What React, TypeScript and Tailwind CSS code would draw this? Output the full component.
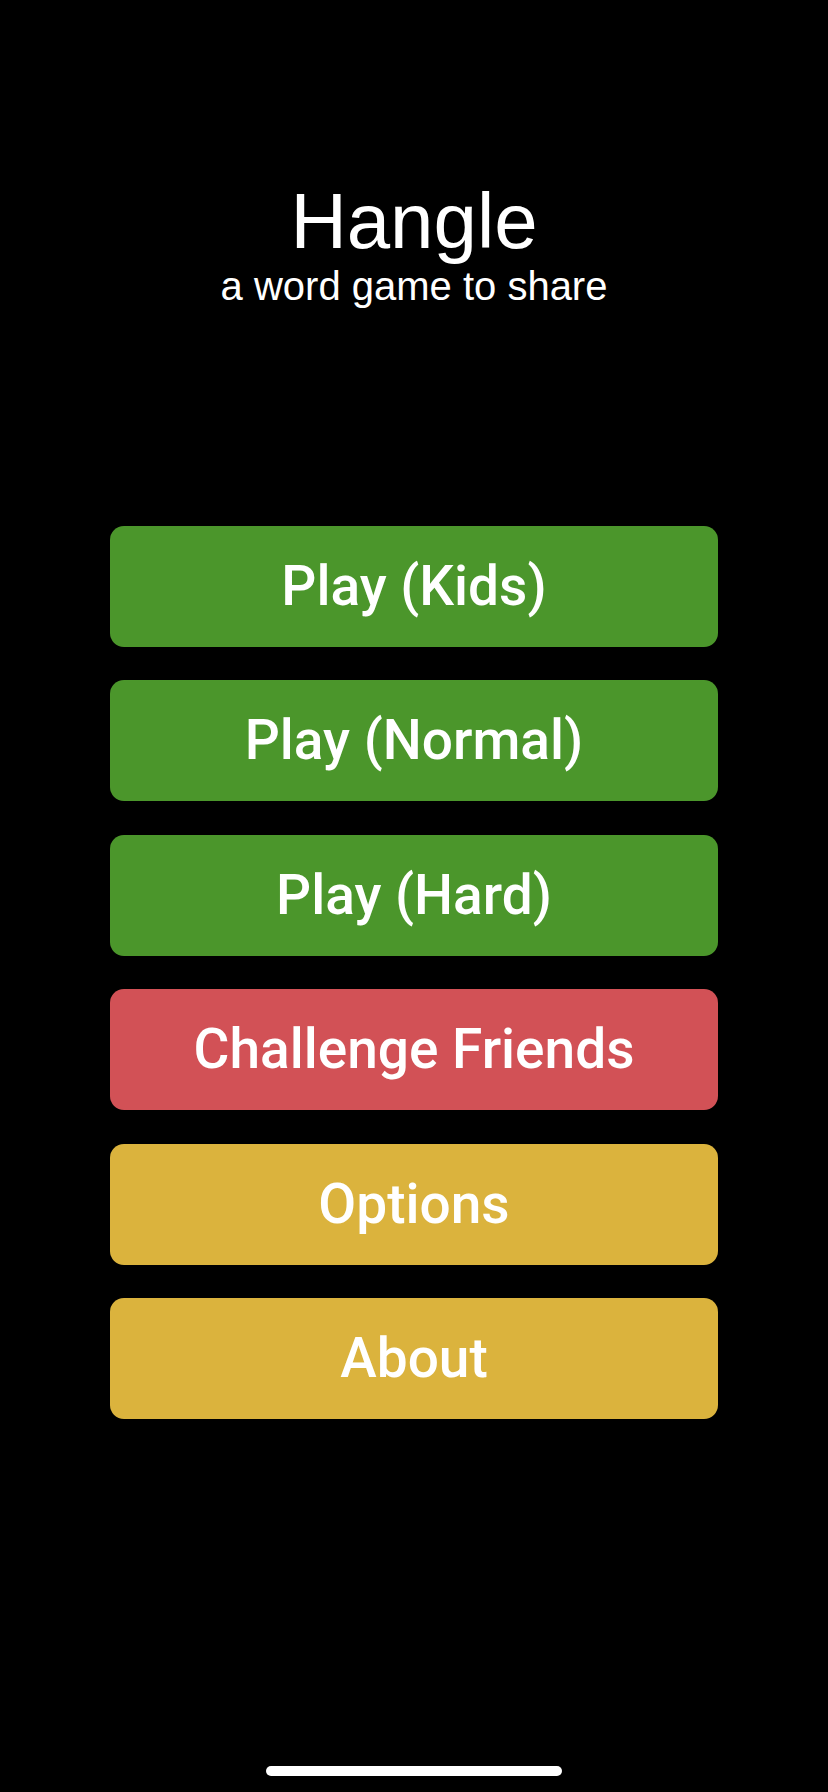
import React from "react";

const buttons: { label: string; cls: string }[] = [
  { label: "Play (Kids)", cls: "bg-[#4b962b]" },
  { label: "Play (Normal)", cls: "bg-[#4b962b]" },
  { label: "Play (Hard)", cls: "bg-[#4b962b]" },
  { label: "Challenge Friends", cls: "bg-[#d25156]" },
  { label: "Options", cls: "bg-[#dbb33d]" },
  { label: "About", cls: "bg-[#dbb33d]" },
];

export default function App() {
  return (
    <div className="w-[828px] h-[1792px] bg-black flex flex-col items-center relative overflow-hidden">
      <div className="pt-[182px] flex flex-col items-center text-white font-['Liberation_Sans',Arial,sans-serif]">
        <div className="text-[78px] leading-none">Hangle</div>
        <div className="mt-[6px] text-[40px] leading-none">a word game to share</div>
      </div>
      <div className="mt-[220px] w-[608px] flex flex-col gap-[33.4px]">
        {buttons.map((b) => (
          <div
            key={b.label}
            className={`h-[121px] rounded-[14px] flex items-center justify-center text-white text-[55px] leading-none font-medium font-['Roboto',sans-serif] ${b.cls}`}
          >
            {b.label}
          </div>
        ))}
      </div>
      <div className="absolute left-[266px] top-[1766px] w-[296px] h-[10px] rounded-full bg-white" />
    </div>
  );
}
